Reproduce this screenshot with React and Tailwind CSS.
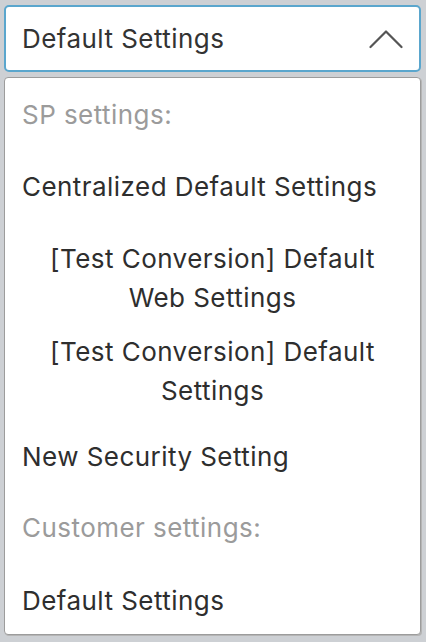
import React from 'react'

const font = { fontFamily: 'Inter, "Liberation Sans", sans-serif' }

function Item({ children, className }) {
  return (
    <div className={`px-[17px] text-[26px] leading-[39px] tracking-[0.45px] ${className}`}>{children}</div>
  )
}

export default function App() {
  return (
    <div className="w-[426px] h-[642px] bg-[#cdd0d4] overflow-hidden" style={font}>
      <div className="ml-[4px] w-[417px] pt-[5px]">
        {/* select trigger */}
        <div className="h-[67px] rounded-[5px] border-2 border-[#5aa6cd] bg-white flex items-center justify-between pl-[16px] pr-[16px]">
          <span className="text-[26px] leading-[39px] tracking-[0.45px] text-[#333333] pb-[1px]">Default Settings</span>
          <svg width="34" height="20" viewBox="0 0 34 20" fill="none">
            <path d="M1.5 18L17 2.5L32.5 18" stroke="#555555" strokeWidth="2.2" strokeLinecap="round" strokeLinejoin="round" />
          </svg>
        </div>

        {/* options list */}
        <div className="mt-[5px] rounded-[4px] border border-[#9c9c9c] bg-white shadow-[1px_1px_0_#b5b5b5]">
          <Item className="pt-[17px] pb-[17px] text-[#9b9b9b]">SP settings:</Item>
          <Item className="pt-[16px] pb-[16px] text-[#2e2e2e]">Centralized Default Settings</Item>
          <Item className="pt-[17px] pb-[7px] text-center text-[#2e2e2e]">
            [Test Conversion] Default
            <br />
            Web Settings
          </Item>
          <Item className="pt-[8px] pb-[14px] text-center text-[#2e2e2e]">
            [Test Conversion] Default
            <br />
            Settings
          </Item>
          <Item className="pt-[13px] pb-[15px] text-[#2e2e2e]">New Security Setting</Item>
          <Item className="pt-[17px] pb-[17px] text-[#9b9b9b]">Customer settings:</Item>
          <Item className="pt-[17px] pb-[14px] text-[#2e2e2e]">Default Settings</Item>
        </div>
      </div>
    </div>
  )
}
